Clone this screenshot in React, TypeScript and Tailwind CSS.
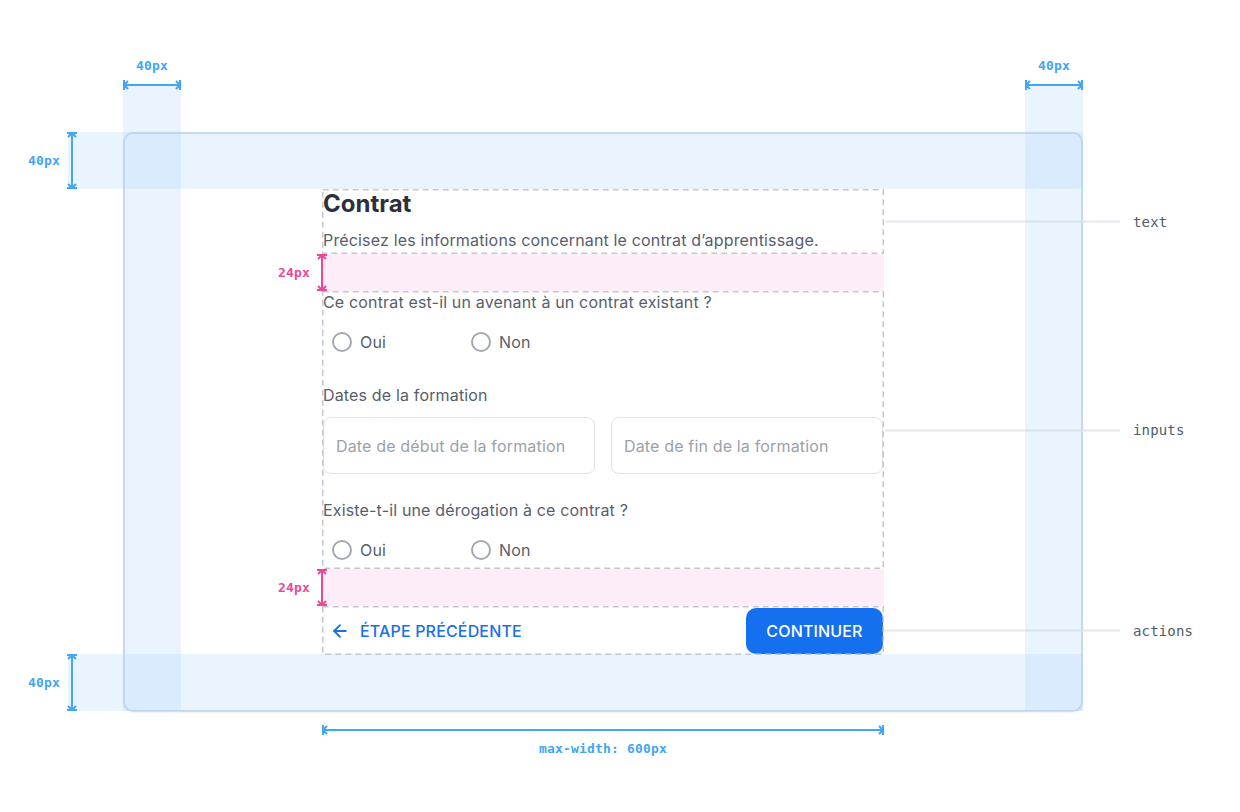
import { ArrowLeft } from "lucide-react";
import type { ReactNode } from "react";

const BLUE = "#42a5f5";
const PINK = "#ec4899";

function DimH({ len, color }: { len: number; color: string }) {
  const d = `M1 1V11 M${len - 1} 1V11 M1 6H${len - 1} M5 2L1 6L5 10 M${len - 5} 2L${len - 1} 6L${len - 5} 10`;
  return (
    <svg width={len} height={12} viewBox={`0 0 ${len} 12`} fill="none" className="shrink-0">
      <path d={d} stroke={color} strokeWidth={2} />
    </svg>
  );
}

function DimV({ len, color }: { len: number; color: string }) {
  const d = `M1 1H11 M1 ${len - 1}H11 M6 1V${len - 1} M2 5L6 1L10 5 M2 ${len - 5}L6 ${len - 1}L10 ${len - 5}`;
  return (
    <svg width={12} height={len} viewBox={`0 0 12 ${len}`} fill="none" className="shrink-0">
      <path d={d} stroke={color} strokeWidth={2} />
    </svg>
  );
}

function Section({ label, className, children }: { label: string; className: string; children: ReactNode }) {
  return (
    <div className={`relative ${className}`}>
      <svg className="pointer-events-none absolute inset-0 h-full w-full overflow-visible" fill="none">
        <rect x="0.75" y="0.75" width="calc(100% - 1.5px)" height="calc(100% - 1.5px)" stroke="#c3c7cf" strokeWidth={1.5} strokeDasharray="6 4" />
      </svg>
      {children}
      {/* callout */}
      <div className="absolute left-full top-1/2 ml-px flex -translate-y-1/2 items-center gap-[13px]">
        <div className="h-[2px] w-[235px] bg-[#e6e8ed]" />
        <span className="font-['DejaVu_Sans_Mono',monospace] text-[14px] text-[#505b6c]">{label}</span>
      </div>
    </div>
  );
}

function Gap() {
  return (
    <div className="relative h-[37px] bg-[#fcedf8]">
      <div className="absolute right-[calc(100%-6px)] top-0 flex h-full items-center gap-[6px]">
        <span className="font-['DejaVu_Sans_Mono',monospace] text-[13px] font-bold text-[#ec4899]">24px</span>
        <DimV len={37} color={PINK} />
      </div>
    </div>
  );
}

function RadioGroup() {
  return (
    <div className="flex h-6 items-center pl-[9px] text-[16px] text-[#575e6c]">
      <label className="flex w-[139px] items-center gap-2">
        <span className="h-5 w-5 rounded-full border-2 border-[#a3a8b3]" />
        Oui
      </label>
      <label className="flex items-center gap-2">
        <span className="h-5 w-5 rounded-full border-2 border-[#a3a8b3]" />
        Non
      </label>
    </div>
  );
}

function DateInput({ placeholder }: { placeholder: string }) {
  return (
    <div className="flex h-[57px] flex-1 items-center rounded-[8px] border border-[#dfe1e6] px-3 text-[16px] text-[#9ba1aa]">
      {placeholder}
    </div>
  );
}

export default function App() {
  return (
    <div className="relative h-[812px] w-[1240px] overflow-hidden bg-white font-['Inter',sans-serif] tracking-[0.01em]">
      {/* frame */}
      <div className="pl-[123px] pt-[132px]">
        <div className="h-[580px] w-[960px] rounded-[10px] border-2 border-[#d2dce8] pt-[55px] shadow-[0_1px_2px_rgba(15,23,42,0.06)]">
          <div className="mx-auto w-[562px]">
            <Section label="text" className="h-[65px] pl-px">
              <h1 className="text-[24px] font-bold leading-[30px] tracking-normal text-[#2b303b]">Contrat</h1>
              <p className="mt-[9px] text-[16px] leading-6 text-[#575e6c]">
                Précisez les informations concernant le contrat d’apprentissage.
              </p>
            </Section>
            <Gap />
            <Section label="inputs" className="h-[278px] pl-px">
              <p className="text-[16px] leading-[22px] text-[#575e6c]">Ce contrat est-il un avenant à un contrat existant ?</p>
              <div className="mt-[17px]">
                <RadioGroup />
              </div>
              <p className="mt-[30px] text-[16px] leading-[22px] text-[#575e6c]">Dates de la formation</p>
              <div className="mt-[11px] flex gap-4 pr-px">
                <DateInput placeholder="Date de début de la formation" />
                <DateInput placeholder="Date de fin de la formation" />
              </div>
              <p className="mt-[25px] text-[16px] leading-[22px] text-[#575e6c]">Existe-t-il une dérogation à ce contrat ?</p>
              <div className="mt-[17px]">
                <RadioGroup />
              </div>
            </Section>
            <Gap />
            <Section label="actions" className="flex h-[49px] items-center justify-between pl-[8px] pr-px">
              <button className="flex items-center gap-[10px] text-[16px] font-medium text-[#1a6fe8]">
                <ArrowLeft size={20} strokeWidth={2.2} />
                ÉTAPE PRÉCÉDENTE
              </button>
              <button className="h-[46px] w-[137px] rounded-[10px] bg-[#1570ef] text-[16px] font-medium text-white">CONTINUER</button>
            </Section>
          </div>
        </div>
        {/* max-width dimension */}
        <div className="mt-[12px] flex w-[960px] flex-col items-center gap-[3px] font-['DejaVu_Sans_Mono',monospace] text-[13px] font-bold text-[#42a5f5]">
          <DimH len={562} color={BLUE} />
          <span>max-width: 600px</span>
        </div>
      </div>

      {/* padding bands (overlay) */}
      <div className="absolute left-[68px] top-[132px] h-[57px] w-[1015px] bg-[rgba(167,209,251,0.24)]" />
      <div className="absolute left-[68px] top-[654px] h-[57px] w-[1015px] bg-[rgba(167,209,251,0.24)]" />
      <div className="absolute left-[123px] top-[85px] h-[626px] w-[58px] bg-[rgba(167,209,251,0.24)]" />
      <div className="absolute left-[1025px] top-[85px] h-[626px] w-[58px] bg-[rgba(167,209,251,0.24)]" />

      {/* padding dimensions */}
      <div className="absolute inset-0 font-['DejaVu_Sans_Mono',monospace] text-[13px] font-bold text-[#42a5f5]">
        <div className="absolute left-[123px] top-[56px] flex w-[58px] flex-col items-center gap-[3px]">
          <span>40px</span>
          <DimH len={58} color={BLUE} />
        </div>
        <div className="absolute left-[1025px] top-[56px] flex w-[58px] flex-col items-center gap-[3px]">
          <span>40px</span>
          <DimH len={58} color={BLUE} />
        </div>
        <div className="absolute left-[28px] top-[132px] flex items-center gap-[6px]">
          <span>40px</span>
          <DimV len={57} color={BLUE} />
        </div>
        <div className="absolute left-[28px] top-[654px] flex items-center gap-[6px]">
          <span>40px</span>
          <DimV len={57} color={BLUE} />
        </div>
      </div>
    </div>
  );
}
